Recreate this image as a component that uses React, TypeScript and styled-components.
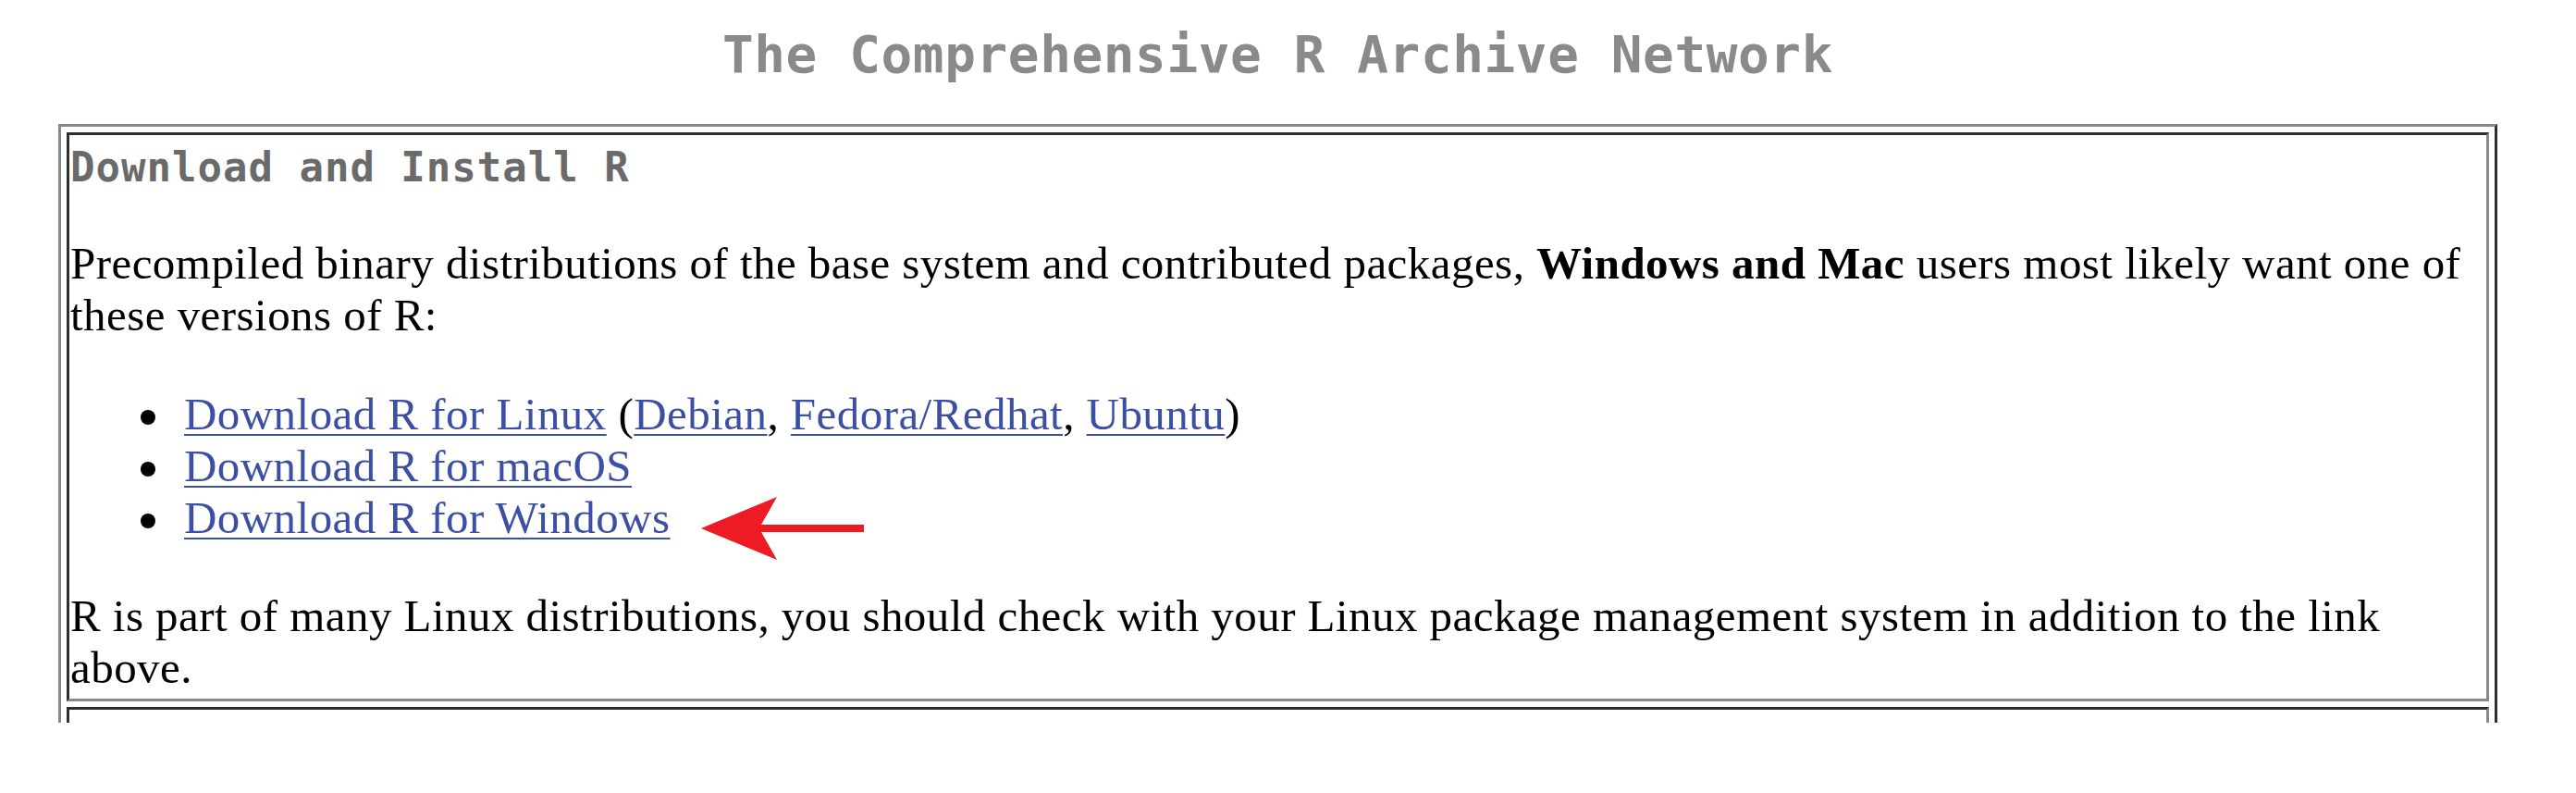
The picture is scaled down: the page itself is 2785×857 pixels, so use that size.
import React from "react";
import styled, { createGlobalStyle } from "styled-components";

const GlobalStyle = createGlobalStyle`
  html, body {
    margin: 0;
    padding: 0;
    background: #ffffff;
  }
  body {
    font-family: "Liberation Serif", "Times New Roman", serif;
    font-size: 49px;
    line-height: 56px;
    letter-spacing: 0.45px;
    color: #000000;
  }
`;

const Viewport = styled.div`
  height: 781px;
  overflow: hidden;
  padding: 26px 0 0 63px;
  box-sizing: border-box;
`;

const Column = styled.div`
  width: 2637px;
  display: flex;
  flex-direction: column;
`;

const Title = styled.h1`
  margin: 0 0 42px;
  text-align: center;
  font-family: "DejaVu Sans Mono", "Liberation Mono", monospace;
  font-weight: bold;
  font-size: 56px;
  line-height: 66px;
  letter-spacing: 0.6px;
  color: #8a8a8a;
`;

const Frame = styled.table`
  width: 100%;
  border-collapse: separate;
  border-spacing: 6px;
  border-style: solid;
  border-width: 3px;
  border-color: #888888 #2f2f2f #2f2f2f #888888;
  padding: 0;
`;

const Cell = styled.td<{ $tall?: boolean }>`
  border-style: solid;
  border-width: 3px;
  border-color: #2f2f2f #888888 #888888 #2f2f2f;
  padding: 1px 1px 5px;
  vertical-align: top;
  height: ${(p) => (p.$tall ? "300px" : "auto")};
`;

const Heading = styled.h2`
  margin: 8px 0 0;
  font-family: "DejaVu Sans Mono", "Liberation Mono", monospace;
  font-weight: bold;
  font-size: 44px;
  line-height: 52px;
  letter-spacing: 1px;
  color: #6a6a6a;
`;

const Para = styled.p<{ $gap: number }>`
  margin: ${(p) => p.$gap}px 0 0;
`;

const Links = styled.ul`
  margin: 51px 0 0;
  padding: 0 0 0 123px;
  list-style: none;
`;

const Item = styled.li`
  &::before {
    content: "";
    display: inline-block;
    width: 16px;
    height: 16px;
    border-radius: 50%;
    background: #000000;
    margin: 0 31px 0 -47px;
    vertical-align: 5px;
  }
`;

const Link = styled.a`
  color: #3c4fa2;
  text-decoration: underline;
  text-decoration-thickness: 2px;
  text-underline-offset: 5px;
`;

const ArrowAnchor = styled.span`
  display: inline-block;
  position: relative;
  width: 0;
  height: 0;
  vertical-align: baseline;
`;

const ArrowSvg = styled.svg`
  position: absolute;
  left: 31px;
  top: -41px;
`;

const RedArrow = () => (
  <ArrowAnchor>
    <ArrowSvg width="180" height="72" viewBox="0 0 180 72">
      <polygon
        points="2,36 84,2 67,32 178,32 178,40 67,40 84,70"
        fill="#ed1c24"
      />
    </ArrowSvg>
  </ArrowAnchor>
);

export default function App() {
  return (
    <>
      <GlobalStyle />
      <Viewport>
        <Column>
          <Title>The Comprehensive R Archive Network</Title>
          <Frame>
            <tbody>
              <tr>
                <Cell>
                  <Heading>Download and Install R</Heading>
                  <Para $gap={50}>
                    Precompiled binary distributions of the base system and
                    contributed packages, <b>Windows and Mac</b> users most
                    likely want one of these versions of R:
                  </Para>
                  <Links>
                    <Item>
                      <Link href="#linux">Download R for Linux</Link> (
                      <Link href="#debian">Debian</Link>,{" "}
                      <Link href="#fedora">Fedora/Redhat</Link>,{" "}
                      <Link href="#ubuntu">Ubuntu</Link>)
                    </Item>
                    <Item>
                      <Link href="#macos">Download R for macOS</Link>
                    </Item>
                    <Item>
                      <Link href="#windows">Download R for Windows</Link>
                      <RedArrow />
                    </Item>
                  </Links>
                  <Para $gap={50}>
                    R is part of many Linux distributions, you should check
                    with your Linux package management system in addition to
                    the link above.
                  </Para>
                </Cell>
              </tr>
              <tr>
                <Cell $tall> </Cell>
              </tr>
            </tbody>
          </Frame>
        </Column>
      </Viewport>
    </>
  );
}
